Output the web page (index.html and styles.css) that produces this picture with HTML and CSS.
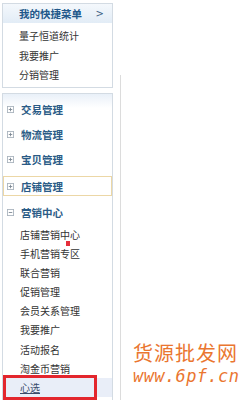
FILE: index.html
```html
<!DOCTYPE html>
<html>
<head>
<meta charset="utf-8">
<link rel="stylesheet" href="styles.css">
</head>
<body>
<div class="page">
  <div class="sidebar">
    <div class="quick">
      <div class="quick-head"><span class="quick-title">我的快捷菜单</span><span class="arrow">&gt;</span></div>
      <ul class="quick-list">
        <li>量子恒道统计</li>
        <li>我要推广</li>
        <li>分销管理</li>
      </ul>
    </div>
    <div class="menu">
      <div class="sec"><svg class="ico" viewBox="0 0 8 8"><rect x="0.5" y="0.5" width="7" height="7" fill="#fff" stroke="#a9b3bd"/><path d="M2 4h4M4 2v4" stroke="#7d8893"/></svg><span>交易管理</span></div>
      <div class="sec"><svg class="ico" viewBox="0 0 8 8"><rect x="0.5" y="0.5" width="7" height="7" fill="#fff" stroke="#a9b3bd"/><path d="M2 4h4M4 2v4" stroke="#7d8893"/></svg><span>物流管理</span></div>
      <div class="sec"><svg class="ico" viewBox="0 0 8 8"><rect x="0.5" y="0.5" width="7" height="7" fill="#fff" stroke="#a9b3bd"/><path d="M2 4h4M4 2v4" stroke="#7d8893"/></svg><span>宝贝管理</span></div>
      <div class="sec sec-active"><svg class="ico" viewBox="0 0 8 8"><rect x="0.5" y="0.5" width="7" height="7" fill="#fff" stroke="#a9b3bd"/><path d="M2 4h4M4 2v4" stroke="#7d8893"/></svg><span>店铺管理</span></div>
      <div class="sec sec-open"><svg class="ico" viewBox="0 0 8 8"><rect x="0.5" y="0.5" width="7" height="7" fill="#fff" stroke="#a9b3bd"/><path d="M2 4h4" stroke="#7d8893"/></svg><span>营销中心</span></div>
      <ul class="sub">
        <li>店铺营销中心</li>
        <li class="has-new">手机营销专区<i class="new"></i></li>
        <li>联合营销</li>
        <li>促销管理</li>
        <li>会员关系管理</li>
        <li>我要推广</li>
        <li>活动报名</li>
        <li>淘金币营销</li>
        <li class="picked"><span class="u">心选</span></li>
      </ul>
    </div>
  </div>
  <div class="main">
    <div class="mark">
      <div class="mark-cn">货源批发网</div>
      <div class="mark-en">www.6pf.cn</div>
    </div>
  </div>
</div>
</body>
</html>
```
FILE: styles.css
```css
html, body {
  margin: 0;
  padding: 0;
  background: #fff;
  overflow: hidden;
}
body {
  font-family: "Noto Sans CJK SC", "Noto Sans", sans-serif;
  color: #333;
  width: 249px;
  height: 400px;
}
ul { list-style: none; margin: 0; padding: 0; }
.page {
  display: flex;
  height: 400px;
  position: relative;
}
.sidebar {
  width: 111px;
  margin-left: 2px;
  padding-top: 3px;
  display: flex;
  flex-direction: column;
}
.quick {
  border: 1px solid #d3dbe3;
  box-sizing: border-box;
  height: 85px;
}
.quick-head {
  height: 19px;
  display: flex;
  align-items: center;
  justify-content: space-between;
  padding: 0 8px 0 16px;
  background: linear-gradient(#f4f8fc, #e2ecf6);
}
.quick-title {
  font-size: 10.5px;
  font-weight: bold;
  color: #21588a;
}
.arrow {
  font-family: "DejaVu Sans", sans-serif;
  font-size: 10px;
  color: #3c6285;
}
.quick-list {
  padding: 3px 0 0 16px;
}
.quick-list li {
  font-size: 10px;
  line-height: 19.5px;
  height: 19.5px;
  color: #333;
}
.menu {
  margin-top: 5px;
  flex: 1;
  border: 1px solid #d3dbe3;
  border-bottom: none;
  padding-top: 3px;
  background: linear-gradient(#e9f0f8, #fff 14px);
}
.sec {
  height: 25px;
  display: flex;
  align-items: center;
  padding-left: 4px;
  gap: 7px;
  font-size: 10.5px;
  font-weight: bold;
  color: #2a5b86;
}
.ico { width: 7px; height: 7px; flex: none; }
.sec-active {
  height: 20px;
  margin-top: 4px;
  margin-bottom: 4px;
  border: 1px solid #ecd7a6;
  box-sizing: border-box;
  padding-left: 3px;
}
.sub li {
  font-size: 10px;
  line-height: 19.1px;
  height: 19.1px;
  padding-left: 17px;
  color: #333;
  position: relative;
}
.new {
  position: absolute;
  left: 63px;
  top: -3px;
  width: 4px;
  height: 5px;
  background: #e52e3a;
}
.picked {
  background: #e9eef8;
}
.picked .u {
  text-decoration: underline;
  color: #3a4c6a;
}
.picked::after {
  content: "";
  position: absolute;
  left: 0;
  top: -3px;
  bottom: -3px;
  width: 94px;
  border: 3px solid #e3262d;
  box-sizing: border-box;
}
.main {
  flex: 1;
  margin-left: 7px;
  margin-top: 75px;
  border-left: 1px solid #dcdcdc;
}
.mark {
  position: absolute;
  left: 133px;
  top: 340px;
  color: #ea7630;
}
.mark-cn {
  font-family: "Noto Sans CJK SC", sans-serif;
  font-size: 20px;
  line-height: 26px;
  letter-spacing: 1px;
}
.mark-en {
  font-family: "DejaVu Sans Mono", monospace;
  font-size: 17px;
  line-height: 20px;
  font-style: italic;
  letter-spacing: 0.4px;
}
```
